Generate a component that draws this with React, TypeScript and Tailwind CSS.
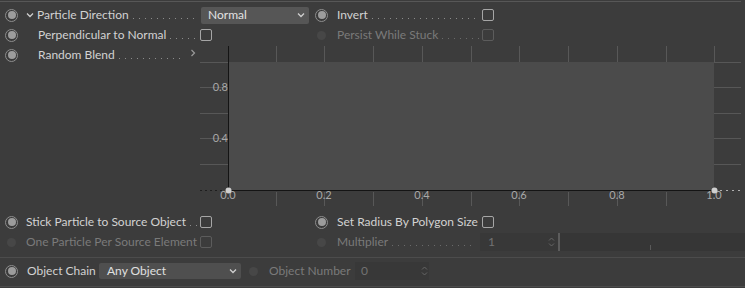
import React from "react";

const Radio = () => (
  <span className="w-[13px] h-[13px] shrink-0 rounded-full border border-[#8e8e8e] bg-[#3a3a3a] flex items-center justify-center">
    <span className="w-[8px] h-[8px] rounded-full bg-[#9c9c9c]" />
  </span>
);

const DimDot = () => (
  <span className="w-[13px] h-[13px] shrink-0 flex items-center justify-center">
    <span className="w-[9px] h-[9px] rounded-full bg-[#474747]" />
  </span>
);

const Check = ({ dim }: { dim?: boolean }) => (
  <span
    className={
      dim
        ? "w-[12px] h-[12px] shrink-0 rounded-[2px] border border-[#5c5c5c]"
        : "w-[12px] h-[12px] shrink-0 rounded-[2px] border border-[#a6a6a6]"
    }
  />
);

const Dots = ({ dim }: { dim?: boolean }) => (
  <span
    className={
      dim
        ? "flex-1 self-end mb-[6px] ml-[4px] mr-[3px] h-px bg-[linear-gradient(to_right,#6a6a6a_1px,transparent_1px)] bg-[length:6px_1px] bg-repeat-x"
        : "flex-1 self-end mb-[6px] ml-[4px] mr-[3px] h-px bg-[linear-gradient(to_right,#8c8c8c_1px,transparent_1px)] bg-[length:6px_1px] bg-repeat-x"
    }
  />
);

const Label = ({
  text,
  dim,
  dots = true,
  className,
}: {
  text: string;
  dim?: boolean;
  dots?: boolean;
  className: string;
}) => (
  <span className={"flex h-full items-center " + className}>
    <span className={dim ? "text-[#7a7a7a] whitespace-nowrap" : "text-[#d2d2d2] whitespace-nowrap"}>{text}</span>
    {dots ? <Dots dim={dim} /> : null}
  </span>
);

const ChevDown = () => (
  <svg width="8" height="6" viewBox="0 0 8 6" className="shrink-0">
    <path d="M1 1.5 L4 4.5 L7 1.5" fill="none" stroke="#cfcfcf" strokeWidth="1.3" />
  </svg>
);

const Spinner = () => (
  <svg width="7" height="12" viewBox="0 0 7 12" className="shrink-0">
    <path d="M1 4.5 L3.5 2 L6 4.5" fill="none" stroke="#666" strokeWidth="1" />
    <path d="M1 7.5 L3.5 10 L6 7.5" fill="none" stroke="#666" strokeWidth="1" />
  </svg>
);

const Graph = () => {
  const ticks = [76, 124, 173, 222, 271, 319, 368, 417, 466, 514];
  const grid = [17, 42, 68, 93, 119];
  const xl = [
    ["0.0", 28],
    ["0.2", 124],
    ["0.4", 222],
    ["0.6", 319],
    ["0.8", 417],
    ["1.0", 514],
  ] as const;
  return (
    <svg width="545" height="162" viewBox="0 0 545 162" className="block shrink-0">
      <rect x="28" y="17" width="486" height="128" fill="#4b4b4b" />
      {ticks.map((x) => (
        <line key={"t" + x} x1={x + 0.5} y1={1} x2={x + 0.5} y2={17} stroke="#585858" />
      ))}
      {ticks.slice(0, 9).map((x) => (
        <line key={"b" + x} x1={x + 0.5} y1={147} x2={x + 0.5} y2={161} stroke="#585858" />
      ))}
      {grid.map((y) => (
        <g key={"g" + y}>
          <line x1={0} y1={y + 0.5} x2={28} y2={y + 0.5} stroke="#575757" />
          <line x1={514} y1={y + 0.5} x2={541} y2={y + 0.5} stroke="#575757" />
        </g>
      ))}
      <line x1={28.5} y1={1} x2={28.5} y2={145} stroke="#141414" />
      <line x1={28} y1={145.5} x2={514} y2={145.5} stroke="#141414" />
      <line x1={0} y1={145.5} x2={28} y2={145.5} stroke="#1e1e1e" strokeDasharray="2 3" />
      <line x1={514} y1={145.5} x2={541} y2={145.5} stroke="#b0b0b0" strokeDasharray="2 4" />
      <g fontFamily="Lato, 'Open Sans', sans-serif" fontSize="11" fill="#a8a8a8">
        <text x={28} y={46} textAnchor="end">0.8</text>
        <text x={28} y={97} textAnchor="end">0.4</text>
        {xl.map(([t, x]) => (
          <text key={t} x={x} y={154} textAnchor="middle">
            {t}
          </text>
        ))}
      </g>
      <circle cx={28.5} cy={145.5} r={3} fill="#cfcfcf" />
      <circle cx={514.5} cy={145.5} r={3} fill="#cfcfcf" />
    </svg>
  );
};

export default function App() {
  return (
    <div
      className="w-[745px] h-[288px] overflow-hidden bg-[#3c3c3c] text-[12px] leading-none select-none"
      style={{ fontFamily: "Lato, 'Open Sans', 'Liberation Sans', sans-serif" }}
    >
      <div className="h-[5px] pt-px">
        <div className="h-px bg-[#575757] mr-[4px]" />
      </div>

      {/* Row 1 */}
      <div className="flex h-[20px] items-center">
        <div className="flex w-[315px] h-full items-center pl-[5px]">
          <Radio />
          <span className="w-[19px] flex justify-center pl-[4px]">
            <ChevDown />
          </span>
          <Label text="Particle Direction" className="w-[164px]" />
          <div className="w-[108px] h-[17px] rounded-[2px] bg-[#565656] flex items-center pl-[7px] pr-[4px] text-[#e2e2e2]">
            <span className="flex-1">Normal</span>
            <ChevDown />
          </div>
        </div>
        <Radio />
        <Label text="Invert" className="w-[154px] pl-[9px]" />
        <Check />
      </div>

      {/* Row 2 */}
      <div className="flex h-[20px] items-center">
        <div className="flex w-[315px] h-full items-center pl-[5px]">
          <Radio />
          <span className="w-[20px]" />
          <Label text="Perpendicular to Normal" className="w-[162px]" />
          <Check />
        </div>
        <DimDot />
        <Label text="Persist While Stuck" dim className="w-[154px] pl-[9px]" />
        <Check dim />
      </div>

      {/* Row 3 with graph */}
      <div className="flex h-[162px]">
        <div className="w-[200px] flex h-[20px] items-center pl-[5px]">
          <Radio />
          <span className="w-[20px]" />
          <Label text="Random Blend" className="w-[150px]" />
          <svg width="6" height="8" viewBox="0 0 6 8" className="ml-[2px] -mt-[4px]">
            <path d="M1.5 1 L4.5 4 L1.5 7" fill="none" stroke="#9a9a9a" strokeWidth="1.2" />
          </svg>
        </div>
        <Graph />
      </div>

      <div className="h-[5px]" />

      {/* Row A */}
      <div className="flex h-[20px] items-center">
        <div className="flex w-[315px] h-full items-center pl-[5px]">
          <Radio />
          <span className="w-[8px]" />
          <Label text="Stick Particle to Source Object" className="w-[174px]" />
          <Check />
        </div>
        <Radio />
        <Label text="Set Radius By Polygon Size" dots={false} className="w-[154px] pl-[9px]" />
        <Check />
      </div>

      {/* Row B */}
      <div className="flex h-[20px] items-center">
        <div className="flex w-[315px] h-full items-center pl-[5px]">
          <DimDot />
          <span className="w-[8px]" />
          <Label text="One Particle Per Source Element" dim dots={false} className="w-[174px]" />
          <Check dim />
        </div>
        <DimDot />
        <Label text="Multiplier" dim className="w-[150px] pl-[9px]" />
        <div className="ml-[2px] w-[78px] h-[18px] bg-[#383838] flex items-center pl-[8px] pr-[3px] text-[#727272]">
          <span className="flex-1">1</span>
          <Spinner />
        </div>
        <div className="flex-1 h-[18px] bg-[#363636] border-l-2 border-[#5c5c5c] relative">
          <span className="absolute left-[90px] bottom-[1px] w-px h-[5px] bg-[#5a5a5a]" />
        </div>
      </div>

      <div className="h-[5px]" />
      <div className="h-px bg-[#4c4c4c]" />
      <div className="h-[3px]" />

      {/* Row C */}
      <div className="flex h-[20px] items-center">
        <div className="flex h-full items-center pl-[5px]">
          <Radio />
          <span className="w-[9px]" />
          <span className="text-[#d2d2d2] whitespace-nowrap w-[72px]">Object Chain</span>
          <div className="w-[142px] h-[16px] rounded-[2px] bg-[#4f4f4f] flex items-center pl-[8px] pr-[4px] text-[#e0e0e0]">
            <span className="flex-1">Any Object</span>
            <ChevDown />
          </div>
        </div>
        <span className="w-[6px]" />
        <DimDot />
        <span className="w-[9px]" />
        <span className="text-[#7a7a7a] whitespace-nowrap w-[86px]">Object Number</span>
        <div className="w-[74px] h-[18px] bg-[#383838] flex items-center pl-[6px] pr-[1px] text-[#727272]">
          <span className="flex-1">0</span>
          <Spinner />
        </div>
      </div>

      <div className="h-[5px]" />
      <div className="h-px bg-[#4c4c4c]" />
    </div>
  );
}
